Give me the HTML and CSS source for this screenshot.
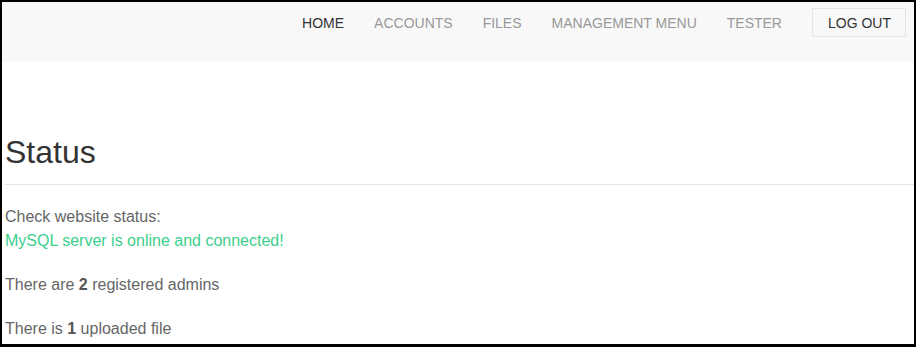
FILE: index.html
```html
<!DOCTYPE html>
<html>
<head>
<meta charset="utf-8">
<title>Status</title>
<link rel="stylesheet" href="styles.css">
</head>
<body>
<div class="frame">
  <nav class="navbar">
    <ul class="nav-links">
      <li><a class="active" href="#">HOME</a></li>
      <li><a href="#">ACCOUNTS</a></li>
      <li><a href="#">FILES</a></li>
      <li><a href="#">MANAGEMENT MENU</a></li>
      <li><a href="#">TESTER</a></li>
    </ul>
    <a class="logout" href="#">LOG OUT</a>
  </nav>
  <main class="content">
    <h1 class="title">Status</h1>
    <hr class="divider">
    <p class="line">Check website status:<br><span class="ok">MySQL server is online and connected!</span></p>
    <p class="line">There are <b>2</b> registered admins</p>
    <p class="line">There is <b>1</b> uploaded file</p>
  </main>
</div>
</body>
</html>
```
FILE: styles.css
```css
* { box-sizing: border-box; }
html, body { margin: 0; padding: 0; background: #fff; }
body { width: 916px; height: 347px; overflow: hidden; }
.frame {
  height: 347px;
  border: 2px solid #000;
  border-bottom-width: 3px;
  font-family: "Liberation Sans", Arial, sans-serif;
  overflow: hidden;
}
.navbar {
  height: 60px;
  background: #f8f8f8;
  display: flex;
  justify-content: flex-end;
  align-items: flex-start;
  padding: 6px 8px 0 0;
}
.nav-links {
  list-style: none;
  margin: 0;
  padding: 0;
  display: flex;
}
.nav-links a {
  display: block;
  padding: 5px 15px 0;
  font-size: 14px;
  line-height: 20px;
  color: #999;
  text-decoration: none;
}
.nav-links a.active { color: #333; }
.logout {
  display: block;
  margin-left: 15px;
  padding: 4px 14px 3px 15px;
  font-size: 14px;
  line-height: 20px;
  color: #333;
  text-decoration: none;
  border: 1px solid #e4e4e4;
  background: #f8f8f8;
}
.content { padding-left: 3px; }
.title {
  margin: 73px 0 0;
  font-size: 32px;
  font-weight: normal;
  line-height: 35px;
  color: #333;
}
.divider {
  margin: 14px 0 0;
  border: 0;
  border-top: 1px solid #e6e6e6;
  height: 0;
}
.line {
  margin: 20px 0 0;
  font-size: 16px;
  line-height: 24px;
  color: #666;
}
.line b { color: #555; }
.ok { color: #3ccf8e; }
```
